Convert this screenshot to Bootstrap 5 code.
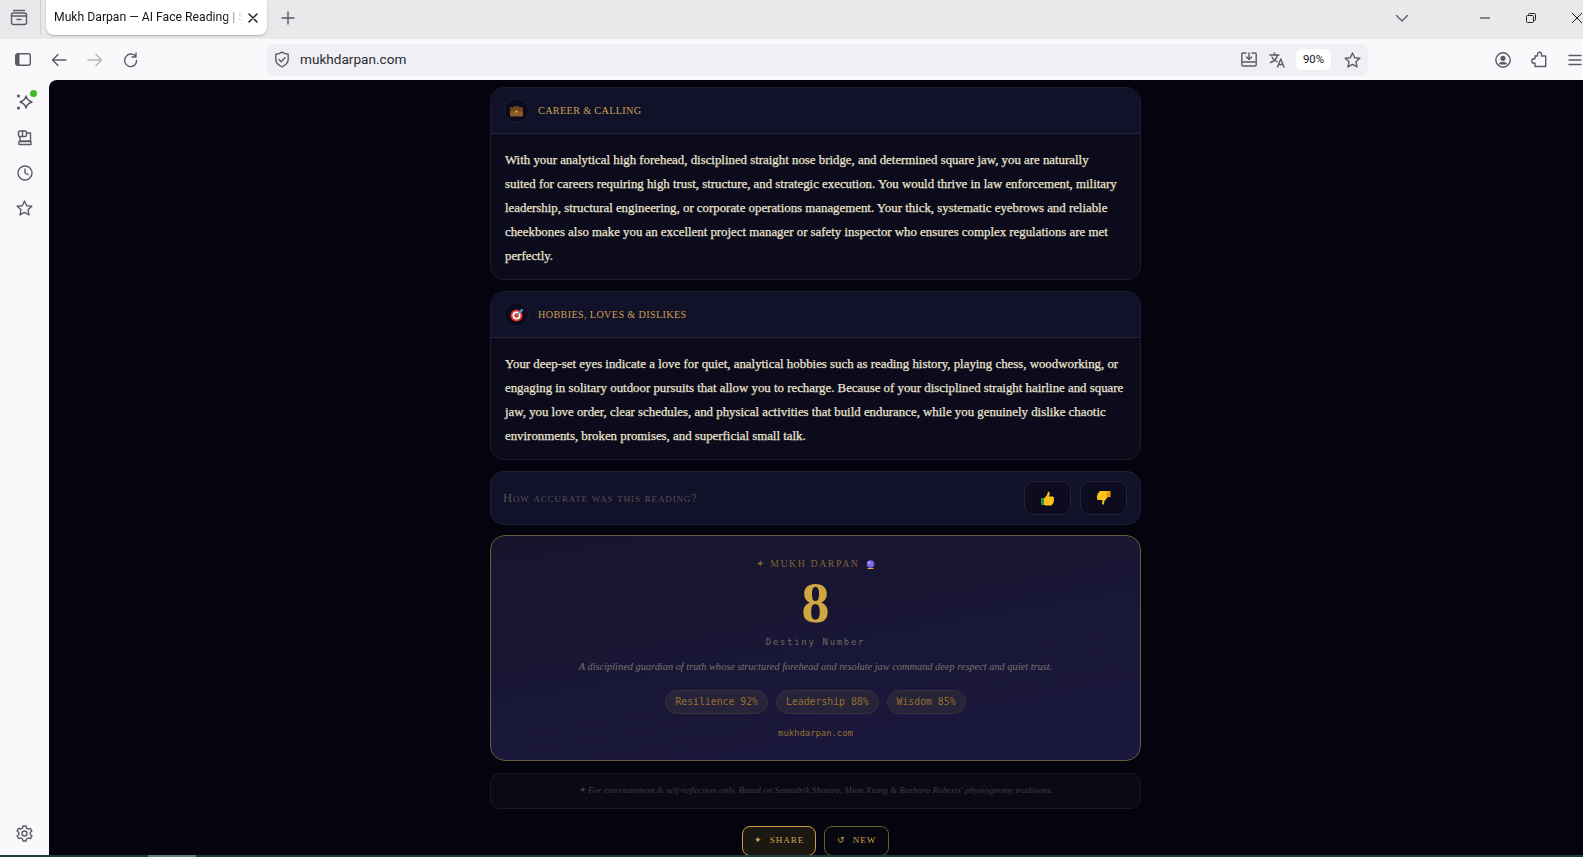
<!doctype html>
<html lang="en">
<head>
    <meta charset="utf-8">
    <meta name="viewport" content="width=device-width, initial-scale=1">
    <title>Mukh Darpan — AI Face Reading</title>
    <link href="https://cdn.jsdelivr.net/npm/bootstrap@5.3.3/dist/css/bootstrap.min.css" rel="stylesheet">
    <style>
        html, body { height: 100%; overflow: hidden; }
        body { background: #f9f9fb; font-family: Roboto, sans-serif; color: #15141a; }
        svg { display: block; flex-shrink: 0; }
        .ico { fill: none; stroke: #5b5b66; stroke-width: 1.4; stroke-linecap: round; stroke-linejoin: round; }

        /* browser chrome */
        .shell { height: 857px; width: 1583px; }
        .tabstrip { height: 39px; background: #e9e9ec; padding-bottom: 4px; }
        .slot { width: 36px; height: 36px; flex-shrink: 0; }
        .slot-tab { width: 41px; height: 35px; flex-shrink: 0; border-right: 1px solid #cfcfd4; }
        .tab-pill { width: 221px; height: 35px; margin-left: 5px; background: #fff; border-radius: 0 0 8px 8px; box-shadow: 0 1px 2px rgba(0,0,0,.25); padding: 0 8px 0 8px; font-size: 12.2px; white-space: nowrap; overflow: hidden; flex-shrink: 0; }
        .tab-label { flex: 1; overflow: hidden; -webkit-mask-image: linear-gradient(to right, #000 90%, transparent); mask-image: linear-gradient(to right, #000 90%, transparent); }
        .tab-plus { margin-left: 3px; }
        .list-chevron { margin-left: 1078px; }
        .win-btn { width: 46px; height: 35px; flex-shrink: 0; }
        .min-gap { margin-left: 42px; }
        .toolbar { height: 41px; background: #f9f9fb; padding-left: 5px; overflow: hidden; }
        .urlbar { width: 1102px; height: 32px; margin-left: 117px; flex-shrink: 0; background: #f0f0f4; border-radius: 8px; padding: 0 2px 0 8px; font-size: 13.6px; }
        .url-text { margin-left: 10px; color: #2b2a33; }
        .zoom-pill { width: 35px; height: 21px; background: #fff; border-radius: 6px; font-size: 11.4px; margin: 0 7px 0 5px; color: #15141a; }
        .url-act { width: 28px; }
        .tool-gap { margin-left: 117px; }
        .mainrow { height: 775px; }
        .rail { width: 49px; flex-shrink: 0; padding-top: 5px; }
        .rail-btn { height: 35px; }
        .rail-dot { width: 7px; height: 7px; background: #46b82b; border-radius: 50%; margin: -4px 0 -4px 17px; }
        .bottom-strip { height: 2px; background: #1f3b42; }
        .strip-thumb { width: 48px; height: 2px; margin-left: 148px; background: #607b7d; }

        /* page */
        .page-view { flex: 1; min-width: 0; background: #04040f; border-top-left-radius: 8px; overflow: hidden; padding: 7px 1px 0 0; }
        .stack { width: 651px; }
        .read-card { background: #0c0b1c; border: 1px solid #1d1c31; border-radius: 14px; margin-bottom: 11px; overflow: hidden; }
        .read-head { height: 46px; padding: 0 13px; background: #12112a; border-bottom: 1px solid #26243c; gap: 9px; }
        .emoji-disc { width: 25px; height: 25px; border-radius: 50%; background: #0c0b1e; border: 1px solid #1f1e38; }
        .read-title { font-family: "Liberation Serif", serif; font-size: 10.2px; letter-spacing: .35px; text-transform: uppercase; color: #c9a24f; }
        .read-body { padding: 14px 13px 11px 14px; font-family: "Liberation Serif", serif; font-size: 12.85px; -webkit-text-stroke: .25px #ebe4cf; line-height: 24px; color: #ebe4cf; white-space: nowrap; }
        .vote-card { height: 54px; padding: 0 13px 0 12px; background: #12112a; border: 1px solid #201f36; border-radius: 14px; margin-bottom: 10px; }
        .vote-q { font-family: "Liberation Serif", serif; font-size: 12.5px; letter-spacing: .85px; font-variant: small-caps; color: #57534f; }
        .vote-row { gap: 9px; }
        .vote-btn { width: 47px; height: 34px; background: #0d0c1f; border: 1px solid #232237; border-radius: 9px; }
        .share-card { height: 226px; border: 1px solid #6a5a3c; border-radius: 15px; background: linear-gradient(170deg, #17152c 0%, #1b1840 100%); padding-top: 21px; margin-bottom: 12px; }
        .brand-line { font-family: "Liberation Serif", serif; font-size: 9.8px; letter-spacing: 1.6px; text-transform: uppercase; color: #7f6431; gap: 6px; height: 15px; }
        .destiny-num { font-family: "Liberation Serif", serif; font-weight: 700; font-size: 56px; line-height: 60px; color: #cfa63f; margin-top: 1px; }
        .destiny-label { font-family: "DejaVu Sans Mono", monospace; font-size: 8.9px; letter-spacing: 1.75px; color: #6f6a60; margin-top: 3px; }
        .tagline { font-family: "Liberation Serif", serif; font-style: italic; font-size: 10.35px; color: #78746d; margin-top: 10px; line-height: 16px; }
        .stat-row { gap: 8px; margin-top: 15px; }
        .stat-pill { height: 24px; padding: 0 9px; border: 1px solid #35313a; background: #27243a; border-radius: 12px; font-family: "DejaVu Sans Mono", monospace; font-size: 9.8px; color: #94702f; }
        .site-line { font-family: "DejaVu Sans Mono", monospace; font-size: 8.9px; color: #94702f; margin-top: 13px; }
        .note-card { height: 36px; background: #0a0a14; border: 1px solid #1a1a25; border-radius: 10px; margin-bottom: 17px; font-family: "Liberation Serif", serif; font-style: italic; font-size: 9.15px; color: #3f3d42; }
        .action-row { gap: 8px; }
        .share-btn, .new-btn { height: 30px; border-radius: 8px; font-family: "Liberation Serif", serif; font-size: 9.2px; letter-spacing: .9px; text-transform: uppercase; color: #c9a24f; gap: 7px; }
        .share-btn { width: 74px; background: #1b1713; border: 1px solid #c79f3c; }
        .new-btn { width: 65px; background: #07070f; border: 1px solid #6f5c2b; }
    </style>
</head>
<body>
<div class="shell d-flex flex-column">

    <!-- tab strip -->
    <div class="tabstrip d-flex align-items-start">
        <div class="slot-tab d-flex align-items-center ps-2">
            <svg class="ico" width="22" height="22" viewBox="0 0 22 22"><rect x="3.5" y="6" width="15" height="11.5" rx="2"/><path d="M5.5 3.5h11M3.5 9h15M9 12.5h4"/></svg>
        </div>
        <div class="tab-pill d-flex align-items-center">
            <span class="tab-label">Mukh Darpan — AI Face Reading | S</span>
            <svg width="12" height="12" viewBox="0 0 12 12" class="ico ms-1"><path style="stroke:#15141a" d="M2 2l8 8M10 2l-8 8"/></svg>
        </div>
        <div class="slot tab-plus d-flex align-items-center justify-content-center">
            <svg class="ico" width="14" height="14" viewBox="0 0 14 14"><path d="M7 1v12M1 7h12"/></svg>
        </div>
        <div class="slot list-chevron d-flex align-items-center justify-content-center">
            <svg class="ico" width="14" height="9" viewBox="0 0 14 9"><path d="M1.5 1.5L7 7l5.5-5.5"/></svg>
        </div>
        <div class="win-btn min-gap d-flex align-items-center justify-content-center">
            <svg width="12" height="2" viewBox="0 0 12 2"><path d="M1 1h10" stroke="#222" stroke-width="1"/></svg>
        </div>
        <div class="win-btn d-flex align-items-center justify-content-center">
            <svg width="12" height="12" viewBox="0 0 12 12" fill="none" stroke="#222"><rect x="1.5" y="3.5" width="7" height="7" rx="1"/><path d="M3.5 3.5v-1a1 1 0 011-1h5a1 1 0 011 1v5a1 1 0 01-1 1h-1"/></svg>
        </div>
        <div class="win-btn d-flex align-items-center justify-content-center">
            <svg width="12" height="12" viewBox="0 0 12 12"><path d="M1 1l10 10M11 1L1 11" stroke="#222" stroke-width="1"/></svg>
        </div>
    </div>

    <!-- toolbar -->
    <div class="toolbar d-flex align-items-center">
        <div class="slot d-flex align-items-center justify-content-center">
            <svg width="16" height="13" viewBox="0 0 16 13" fill="none" stroke="#5b5b66" stroke-width="1.4"><rect x=".7" y=".7" width="14.6" height="11.6" rx="2"/><rect x="1" y="1" width="3.5" height="11" fill="#5b5b66" stroke="none"/></svg>
        </div>
        <div class="slot d-flex align-items-center justify-content-center">
            <svg class="ico" width="16" height="14" viewBox="0 0 16 14"><path d="M15 7H1.5M7 1.5L1.5 7 7 12.5"/></svg>
        </div>
        <div class="slot d-flex align-items-center justify-content-center">
            <svg class="ico" style="stroke:#b4b4ba" width="16" height="14" viewBox="0 0 16 14"><path d="M1 7h13.5M9 1.5L14.5 7 9 12.5"/></svg>
        </div>
        <div class="slot d-flex align-items-center justify-content-center">
            <svg class="ico" width="16" height="16" viewBox="0 0 16 16"><path d="M13.6 8.5A6 6 0 112.8 5 6 6 0 0112 3.5M13 1v4h-4"/></svg>
        </div>
        <div class="urlbar d-flex align-items-center">
            <svg class="ico" width="16" height="17" viewBox="0 0 16 17"><path d="M8 1.2c2 1.3 4 2 6.2 2.1v5c0 3.6-2.6 6-6.2 7.5-3.6-1.5-6.2-3.9-6.2-7.5v-5C4 3.2 6 2.500 8 1.200z"/><path d="M5 8.500l2.200 2.200L11 6.800"/></svg>
            <span class="url-text flex-grow-1">mukhdarpan.com</span>
            <div class="url-act d-flex justify-content-center">
                <svg class="ico" width="16" height="15" viewBox="0 0 16 15"><path d="M5 1H2a1.200 1.200 0 00-1.200 1.200v10.600A1.200 1.200 0 002 14h12a1.200 1.200 0 001.200-1.200V2.200A1.200 1.200 0 0014 1h-3M.8 10h14.400M8 1v6M5.500 5L8 7.500 10.500 5"/></svg>
            </div>
            <div class="url-act d-flex justify-content-center">
                <svg class="ico" width="17" height="16" viewBox="0 0 17 16"><path d="M1 3h9M5.500 1v2M8.500 3c-.6 3-3 6-7 7.500M3 5c1 2.200 3 4 5 4.800M8.500 15l3.200-8 3.300 8M9.700 12.500h4"/></svg>
            </div>
            <div class="zoom-pill d-flex align-items-center justify-content-center">90%</div>
            <div class="url-act d-flex justify-content-center">
                <svg class="ico" width="17" height="16" viewBox="0 0 17 16"><path d="M8.500 1l2.200 4.700 5.100.6-3.800 3.500 1 5.100-4.500-2.500-4.500 2.500 1-5.100L1.200 6.300l5.100-.6z"/></svg>
            </div>
        </div>
        <div class="slot tool-gap d-flex align-items-center justify-content-center">
            <svg class="ico" width="16" height="16" viewBox="0 0 16 16"><circle cx="8" cy="8" r="7.200"/><circle cx="8" cy="6.300" r="2.600" fill="#5b5b66" stroke="none"/><path d="M3.500 12.500c1-2 2.600-2.700 4.500-2.700s3.500.7 4.500 2.700" fill="#5b5b66" stroke="none"/></svg>
        </div>
        <div class="slot d-flex align-items-center justify-content-center">
            <svg class="ico" width="16" height="17" viewBox="0 0 16 17"><path d="M8.500 1.300a2 2 0 012 2V5h4.200v10.500H4V12.200H3a2.200 2.200 0 010-4.400h1V5h2.500V3.300a2 2 0 012-2z"/></svg>
        </div>
        <div class="slot d-flex align-items-center justify-content-center">
            <svg class="ico" width="14" height="12" viewBox="0 0 14 12"><path d="M1 1.500h12M1 6h12M1 10.500h12"/></svg>
        </div>
    </div>

    <div class="mainrow d-flex">
        <!-- side rail -->
        <div class="rail d-flex flex-column">
            <div class="rail-btn d-flex flex-column align-items-center justify-content-center">
                <div class="rail-dot"></div>
                <svg class="ico" width="18" height="18" viewBox="0 0 18 18"><path d="M10 3c.8 3.400 2.200 4.800 6 6-3.800 1.200-5.200 2.600-6 6-.8-3.400-2.200-4.800-6-6 3.800-1.200 5.200-2.600 6-6z"/><circle cx="2.500" cy="3" r=".9" fill="#5b5b66"/><circle cx="2.500" cy="15" r=".9" fill="#5b5b66"/></svg>
            </div>
            <div class="rail-btn d-flex align-items-center justify-content-center">
                <svg class="ico" width="16" height="16" viewBox="0 0 16 16"><rect x="1.500" y="1" width="8" height="5.500" rx="1.200"/><path d="M10 3h3.500v8M3 7v4h10.500M2 11.500h12v3H2z"/><path d="M5.500 1v5.500"/></svg>
            </div>
            <div class="rail-btn d-flex align-items-center justify-content-center">
                <svg class="ico" width="16" height="16" viewBox="0 0 16 16"><circle cx="8" cy="8" r="7"/><path d="M8 4v4l3 1.700"/></svg>
            </div>
            <div class="rail-btn d-flex align-items-center justify-content-center">
                <svg class="ico" width="17" height="16" viewBox="0 0 17 16"><path d="M8.500 1l2.200 4.700 5.100.6-3.800 3.500 1 5.100-4.500-2.500-4.500 2.500 1-5.100L1.200 6.300l5.100-.6z"/></svg>
            </div>
            <div class="rail-btn d-flex align-items-center justify-content-center mt-auto mb-1">
                <svg class="ico" width="17" height="17" viewBox="0 0 17 17"><circle cx="8.500" cy="8.500" r="2.500"/><path d="M7 1h3l.5 2.200 1.700 1 2.200-.7 1.500 2.600-1.700 1.500v2l1.700 1.500-1.500 2.600-2.200-.7-1.700 1L10 16H7l-.5-2.200-1.700-1-2.200.7-1.500-2.600 1.700-1.500v-2L1.100 5.900l1.500-2.600 2.200.7 1.700-1z"/></svg>
            </div>
        </div>

        <!-- reading page -->
        <div class="page-view">
            <div class="stack mx-auto">
                <div class="read-card">
                    <div class="read-head d-flex align-items-center">
                        <div class="emoji-disc d-flex align-items-center justify-content-center">
                            <svg width="13" height="12" viewBox="0 0 13 12"><path d="M4.500 3V1.500h4V3" fill="none" stroke="#6b4423" stroke-width="1"/><rect y="2.500" width="13" height="9" rx="1" fill="#8a5a2b"/><rect y="2.500" width="13" height="4" fill="#6f4520"/><rect x="5.500" y="5.500" width="2" height="2" fill="#f0b232"/></svg>
                        </div>
                        <span class="read-title">Career &amp; Calling</span>
                    </div>
                    <div class="read-body">With your analytical high forehead, disciplined straight nose bridge, and determined square jaw, you are naturally<br>suited for careers requiring high trust, structure, and strategic execution. You would thrive in law enforcement, military<br>leadership, structural engineering, or corporate operations management. Your thick, systematic eyebrows and reliable<br>cheekbones also make you an excellent project manager or safety inspector who ensures complex regulations are met<br>perfectly.</div>
                </div>

                <div class="read-card">
                    <div class="read-head d-flex align-items-center">
                        <div class="emoji-disc d-flex align-items-center justify-content-center">
                            <svg width="14" height="14" viewBox="0 0 14 14"><circle cx="6.500" cy="7.500" r="6" fill="#e5342a"/><circle cx="6.500" cy="7.500" r="4" fill="#fff"/><circle cx="6.500" cy="7.500" r="2.300" fill="#e5342a"/><path d="M7 7l5-5" stroke="#4aa3e0" stroke-width="1.600"/><path d="M10.500 1l3 .5-2 2.500z" fill="#4aa3e0"/></svg>
                        </div>
                        <span class="read-title">Hobbies, Loves &amp; Dislikes</span>
                    </div>
                    <div class="read-body">Your deep-set eyes indicate a love for quiet, analytical hobbies such as reading history, playing chess, woodworking, or<br>engaging in solitary outdoor pursuits that allow you to recharge. Because of your disciplined straight hairline and square<br>jaw, you love order, clear schedules, and physical activities that build endurance, while you genuinely dislike chaotic<br>environments, broken promises, and superficial small talk.</div>
                </div>

                <div class="vote-card d-flex align-items-center justify-content-between">
                    <span class="vote-q">How accurate was this reading?</span>
                    <div class="vote-row d-flex">
                        <button type="button" class="vote-btn d-flex align-items-center justify-content-center p-0">
                            <svg width="15" height="15" viewBox="0 0 15 15"><path d="M1 7h3v7H1z" fill="#2f8f3a"/><path d="M4 7.500l3-3.500 1-3.500c1.500 0 2 1.500 1.500 3L9 5.500h3.500c1.500 0 2 1.500 1.200 2.500.8 1 .5 2.200-.3 2.700.4 1.200-.2 2-1 2.300 0 1-.8 1.500-1.800 1.500H7c-1.500 0-3-.5-3-.5z" fill="#fcc21b"/></svg>
                        </button>
                        <button type="button" class="vote-btn d-flex align-items-center justify-content-center p-0">
                            <svg width="15" height="16" viewBox="0 0 15 16"><path d="M14.500 1v6H11.500V1z" fill="#f59e0b"/><path d="M11.500 7.500l-3 3.500-.8 3.500c-.8.600-1.800-.2-1.600-2l.4-2.500H2.500C1 10 .5 8.700 1.300 7.700.5 6.700.8 5.500 1.600 5 1.200 3.800 1.800 3 2.800 2.700c0-1 .8-1.700 1.800-1.700h7v6.500z" fill="#fcc21b"/></svg>
                        </button>
                    </div>
                </div>

                <div class="share-card d-flex flex-column align-items-center">
                    <div class="brand-line d-flex align-items-center">
                        <span>✦ Mukh Darpan</span>
                        <svg width="9" height="9" viewBox="0 0 9 9"><circle cx="4.500" cy="4" r="3.800" fill="#8066e8"/><circle cx="3.300" cy="2.800" r="1" fill="#c4b5fd"/><path d="M1.500 8h6v1h-6z" fill="#e0a83a"/></svg>
                    </div>
                    <div class="destiny-num">8</div>
                    <div class="destiny-label">Destiny Number</div>
                    <div class="tagline">A disciplined guardian of truth whose structured forehead and resolute jaw command deep respect and quiet trust.</div>
                    <div class="stat-row d-flex">
                        <span class="stat-pill d-flex align-items-center">Resilience 92%</span>
                        <span class="stat-pill d-flex align-items-center">Leadership 88%</span>
                        <span class="stat-pill d-flex align-items-center">Wisdom 85%</span>
                    </div>
                    <div class="site-line">mukhdarpan.com</div>
                </div>

                <div class="note-card d-flex align-items-center justify-content-center">✦ For entertainment &amp; self-reflection only. Based on Samudrik Shastra, Mian Xiang &amp; Barbara Roberts' physiognomy traditions.</div>

                <div class="action-row d-flex justify-content-center">
                    <button type="button" class="share-btn d-flex align-items-center justify-content-center p-0"><span>✦</span><span>Share</span></button>
                    <button type="button" class="new-btn d-flex align-items-center justify-content-center p-0"><span>↺</span><span>New</span></button>
                </div>
            </div>
        </div>
    </div>

    <div class="bottom-strip"><div class="strip-thumb"></div></div>
</div>
<script src="https://cdn.jsdelivr.net/npm/bootstrap@5.3.3/dist/js/bootstrap.bundle.min.js"></script>
</body>
</html>
